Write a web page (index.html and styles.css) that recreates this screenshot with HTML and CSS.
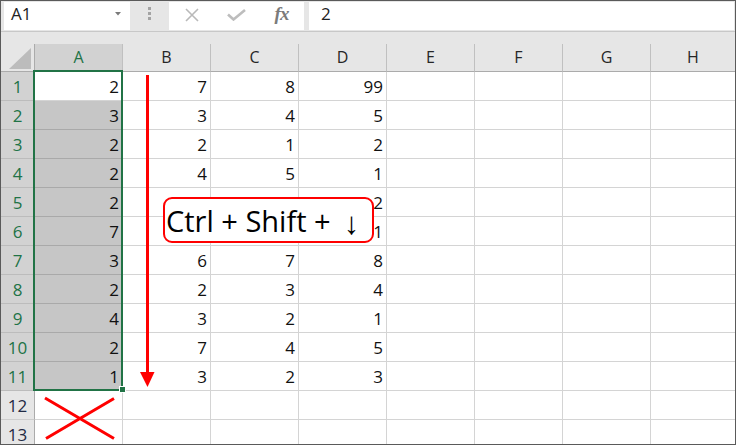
FILE: index.html
```html
<!DOCTYPE html>
<html>
<head>
<meta charset="utf-8">
<link rel="stylesheet" href="styles.css">
</head>
<body>
<div class="sheet">
  <div class="fbar">
    <div class="namebox"><span class="nametext">A1</span><svg class="dd" width="6" height="4" viewBox="0 0 6 4"><polygon points="0,0 6,0 3,3.5" fill="#7a7a7a"/></svg></div>
    <div class="dots"><i></i><i></i><i></i></div>
    <div class="btns">
      <span class="btn"><svg width="14" height="14" viewBox="0 0 14 14"><path d="M1 1 L13 13 M13 1 L1 13" stroke="#b9b9b9" stroke-width="1.6" fill="none"/></svg></span>
      <span class="btn"><svg width="19" height="12" viewBox="0 0 19 12"><path d="M1 5.5 L6.5 10.5 L18 1" stroke="#bdbdbd" stroke-width="2.6" fill="none"/></svg></span>
      <span class="btn fx">fx</span>
    </div>
    <div class="finput">2</div>
  </div>
  <div class="gap"></div>
  <div class="grid">
    <div class="corner"><svg width="22" height="21" viewBox="0 0 22 21"><polygon points="22,0 22,21 0,21" fill="#bcbcbc"/></svg></div>
    <div class="hd on">A</div><div class="hd">B</div><div class="hd">C</div><div class="hd">D</div><div class="hd">E</div><div class="hd">F</div><div class="hd">G</div><div class="hd last">H</div>

    <div class="rh on">1</div><div class="c">2</div><div class="c">7</div><div class="c">8</div><div class="c">99</div><div class="c"></div><div class="c"></div><div class="c"></div><div class="c last"></div>
    <div class="rh on">2</div><div class="c sel">3</div><div class="c">3</div><div class="c">4</div><div class="c">5</div><div class="c"></div><div class="c"></div><div class="c"></div><div class="c last"></div>
    <div class="rh on">3</div><div class="c sel">2</div><div class="c">2</div><div class="c">1</div><div class="c">2</div><div class="c"></div><div class="c"></div><div class="c"></div><div class="c last"></div>
    <div class="rh on">4</div><div class="c sel">2</div><div class="c">4</div><div class="c">5</div><div class="c">1</div><div class="c"></div><div class="c"></div><div class="c"></div><div class="c last"></div>
    <div class="rh on">5</div><div class="c sel">2</div><div class="c"></div><div class="c"></div><div class="c">2</div><div class="c"></div><div class="c"></div><div class="c"></div><div class="c last"></div>
    <div class="rh on">6</div><div class="c sel">7</div><div class="c"></div><div class="c"></div><div class="c">1</div><div class="c"></div><div class="c"></div><div class="c"></div><div class="c last"></div>
    <div class="rh on">7</div><div class="c sel">3</div><div class="c">6</div><div class="c">7</div><div class="c">8</div><div class="c"></div><div class="c"></div><div class="c"></div><div class="c last"></div>
    <div class="rh on">8</div><div class="c sel">2</div><div class="c">2</div><div class="c">3</div><div class="c">4</div><div class="c"></div><div class="c"></div><div class="c"></div><div class="c last"></div>
    <div class="rh on">9</div><div class="c sel">4</div><div class="c">3</div><div class="c">2</div><div class="c">1</div><div class="c"></div><div class="c"></div><div class="c"></div><div class="c last"></div>
    <div class="rh on">10</div><div class="c sel">2</div><div class="c">7</div><div class="c">4</div><div class="c">5</div><div class="c"></div><div class="c"></div><div class="c"></div><div class="c last"></div>
    <div class="rh on">11</div><div class="c sel">1</div><div class="c">3</div><div class="c">2</div><div class="c">3</div><div class="c"></div><div class="c"></div><div class="c"></div><div class="c last"></div>
    <div class="rh">12</div><div class="c"></div><div class="c"></div><div class="c"></div><div class="c"></div><div class="c"></div><div class="c"></div><div class="c"></div><div class="c last"></div>
    <div class="rh">13</div><div class="c"></div><div class="c"></div><div class="c"></div><div class="c"></div><div class="c"></div><div class="c"></div><div class="c"></div><div class="c last"></div>
  </div>

  <div class="selbox"></div>
  <div class="handle"></div>

  <svg class="marks" width="736" height="445" viewBox="0 0 736 445">
    <rect x="146" y="75" width="3" height="298" fill="#ff0000"/>
    <polygon points="140,372 154.5,372 147.5,387" fill="#ff0000"/>
    <path d="M45 398 L114 438.5 M46 438.5 L114 398.5" stroke="#ff0000" stroke-width="3" fill="none"/>
  </svg>

  <div class="callout"><span class="ctext">Ctrl + Shift +</span><span class="arrow">↓</span></div>
</div>
</body>
</html>
```

FILE: styles.css
```css
html, body {
  margin: 0;
  padding: 0;
  background: #ffffff;
}

.sheet {
  position: relative;
  width: 736px;
  height: 445px;
  box-sizing: border-box;
  border: 1px solid #5a5a5a;
  background: #e6e6e6;
  overflow: hidden;
  font-family: "Open Sans", "Noto Sans", sans-serif;
  color: #1a1a1a;
}

/* formula bar */
.fbar {
  display: flex;
  height: 29px;
  padding: 1px 1px 0 3px;
  border-bottom: 1px solid #c8c8c8;
}

.namebox {
  width: 126px;
  height: 28px;
  background: #ffffff;
  display: flex;
  justify-content: space-between;
  align-items: flex-start;
  box-sizing: border-box;
}

.nametext {
  padding-left: 7px;
  font-size: 17px;
  line-height: 23px;
  color: #222222;
}

.dd {
  margin-top: 10px;
  margin-right: 9px;
}

.dots {
  width: 39px;
  display: flex;
  flex-direction: column;
  align-items: center;
  gap: 2px;
  padding-top: 5px;
  box-sizing: border-box;
}

.dots i {
  display: block;
  width: 3px;
  height: 3px;
  background: #a3a3a3;
}

.btns {
  width: 135px;
  height: 28px;
  background: #ffffff;
  display: flex;
}

.btn {
  width: 45px;
  height: 23px;
  display: flex;
  align-items: center;
  justify-content: center;
  padding-top: 3px;
  box-sizing: border-box;
}

.btn.fx {
  padding-top: 0;
  font-family: "Liberation Serif", "DejaVu Serif", serif;
  font-style: italic;
  font-weight: bold;
  font-size: 19px;
  line-height: 23px;
  color: #7b7b7b;
  letter-spacing: -1px;
}

.finput {
  flex: 1;
  height: 28px;
  margin-left: 5px;
  background: #ffffff;
  padding-left: 12px;
  font-size: 17px;
  line-height: 23px;
  color: #222222;
}

.gap {
  height: 12px;
}

/* grid */
.grid {
  display: grid;
  grid-template-columns: 34px repeat(7, 88px) 1fr;
  grid-template-rows: 28px;
  grid-auto-rows: 29px;
}

.corner {
  background: #e6e6e6;
  border-right: 1px solid #ababab;
  border-bottom: 1px solid #ababab;
  box-sizing: border-box;
  display: flex;
  justify-content: flex-end;
  align-items: flex-end;
  padding: 0 3px 2px 0;
}

.hd {
  background: #e6e6e6;
  border-right: 1px solid #c0c0c0;
  border-bottom: 1px solid #ababab;
  box-sizing: border-box;
  text-align: center;
  font-size: 16px;
  line-height: 27px;
  color: #262626;
}

.hd.on {
  background: #d2d2d2;
  color: #217346;
}

.hd.last {
  border-right: none;
}

.rh {
  background: #e6e6e6;
  border-right: 1px solid #ababab;
  border-bottom: 1px solid #cdcdcd;
  box-sizing: border-box;
  text-align: center;
  font-size: 17px;
  line-height: 26px;
  padding-top: 2px;
  color: #1f2a44;
}

.rh.on {
  background: #d2d2d2;
  border-bottom-color: #bcbcbc;
  color: #217346;
}

.c {
  background: #ffffff;
  border-right: 1px solid #d4d4d4;
  border-bottom: 1px solid #d4d4d4;
  box-sizing: border-box;
  text-align: right;
  padding: 2px 3px 0 0;
  font-size: 17px;
  line-height: 26px;
  color: #111111;
}

.c.sel {
  background: #c6c6c6;
  border-bottom-color: #a9a9a9;
}

.c.last {
  border-right: none;
}

/* overlays */
.selbox {
  position: absolute;
  left: 32px;
  top: 69px;
  width: 90px;
  height: 321px;
  box-sizing: border-box;
  border: 2px solid #217346;
}

.handle {
  position: absolute;
  left: 118px;
  top: 385px;
  width: 7px;
  height: 7px;
  box-sizing: border-box;
  border: 1px solid #ffffff;
  background: #217346;
}

.marks {
  position: absolute;
  left: -1px;
  top: -1px;
}

.callout {
  position: absolute;
  left: 162px;
  top: 196px;
  width: 211px;
  height: 46px;
  box-sizing: border-box;
  border: 2px solid #ff0000;
  border-radius: 9px;
  background: #ffffff;
  display: flex;
  align-items: flex-start;
  padding: 2px 0 0 1px;
  color: #000000;
}

.ctext {
  font-size: 29px;
  line-height: 40px;
  white-space: pre;
}

.arrow {
  font-family: "Liberation Sans", sans-serif;
  font-size: 31px;
  line-height: 40px;
  margin-left: 13px;
  margin-top: 3px;
}
```
